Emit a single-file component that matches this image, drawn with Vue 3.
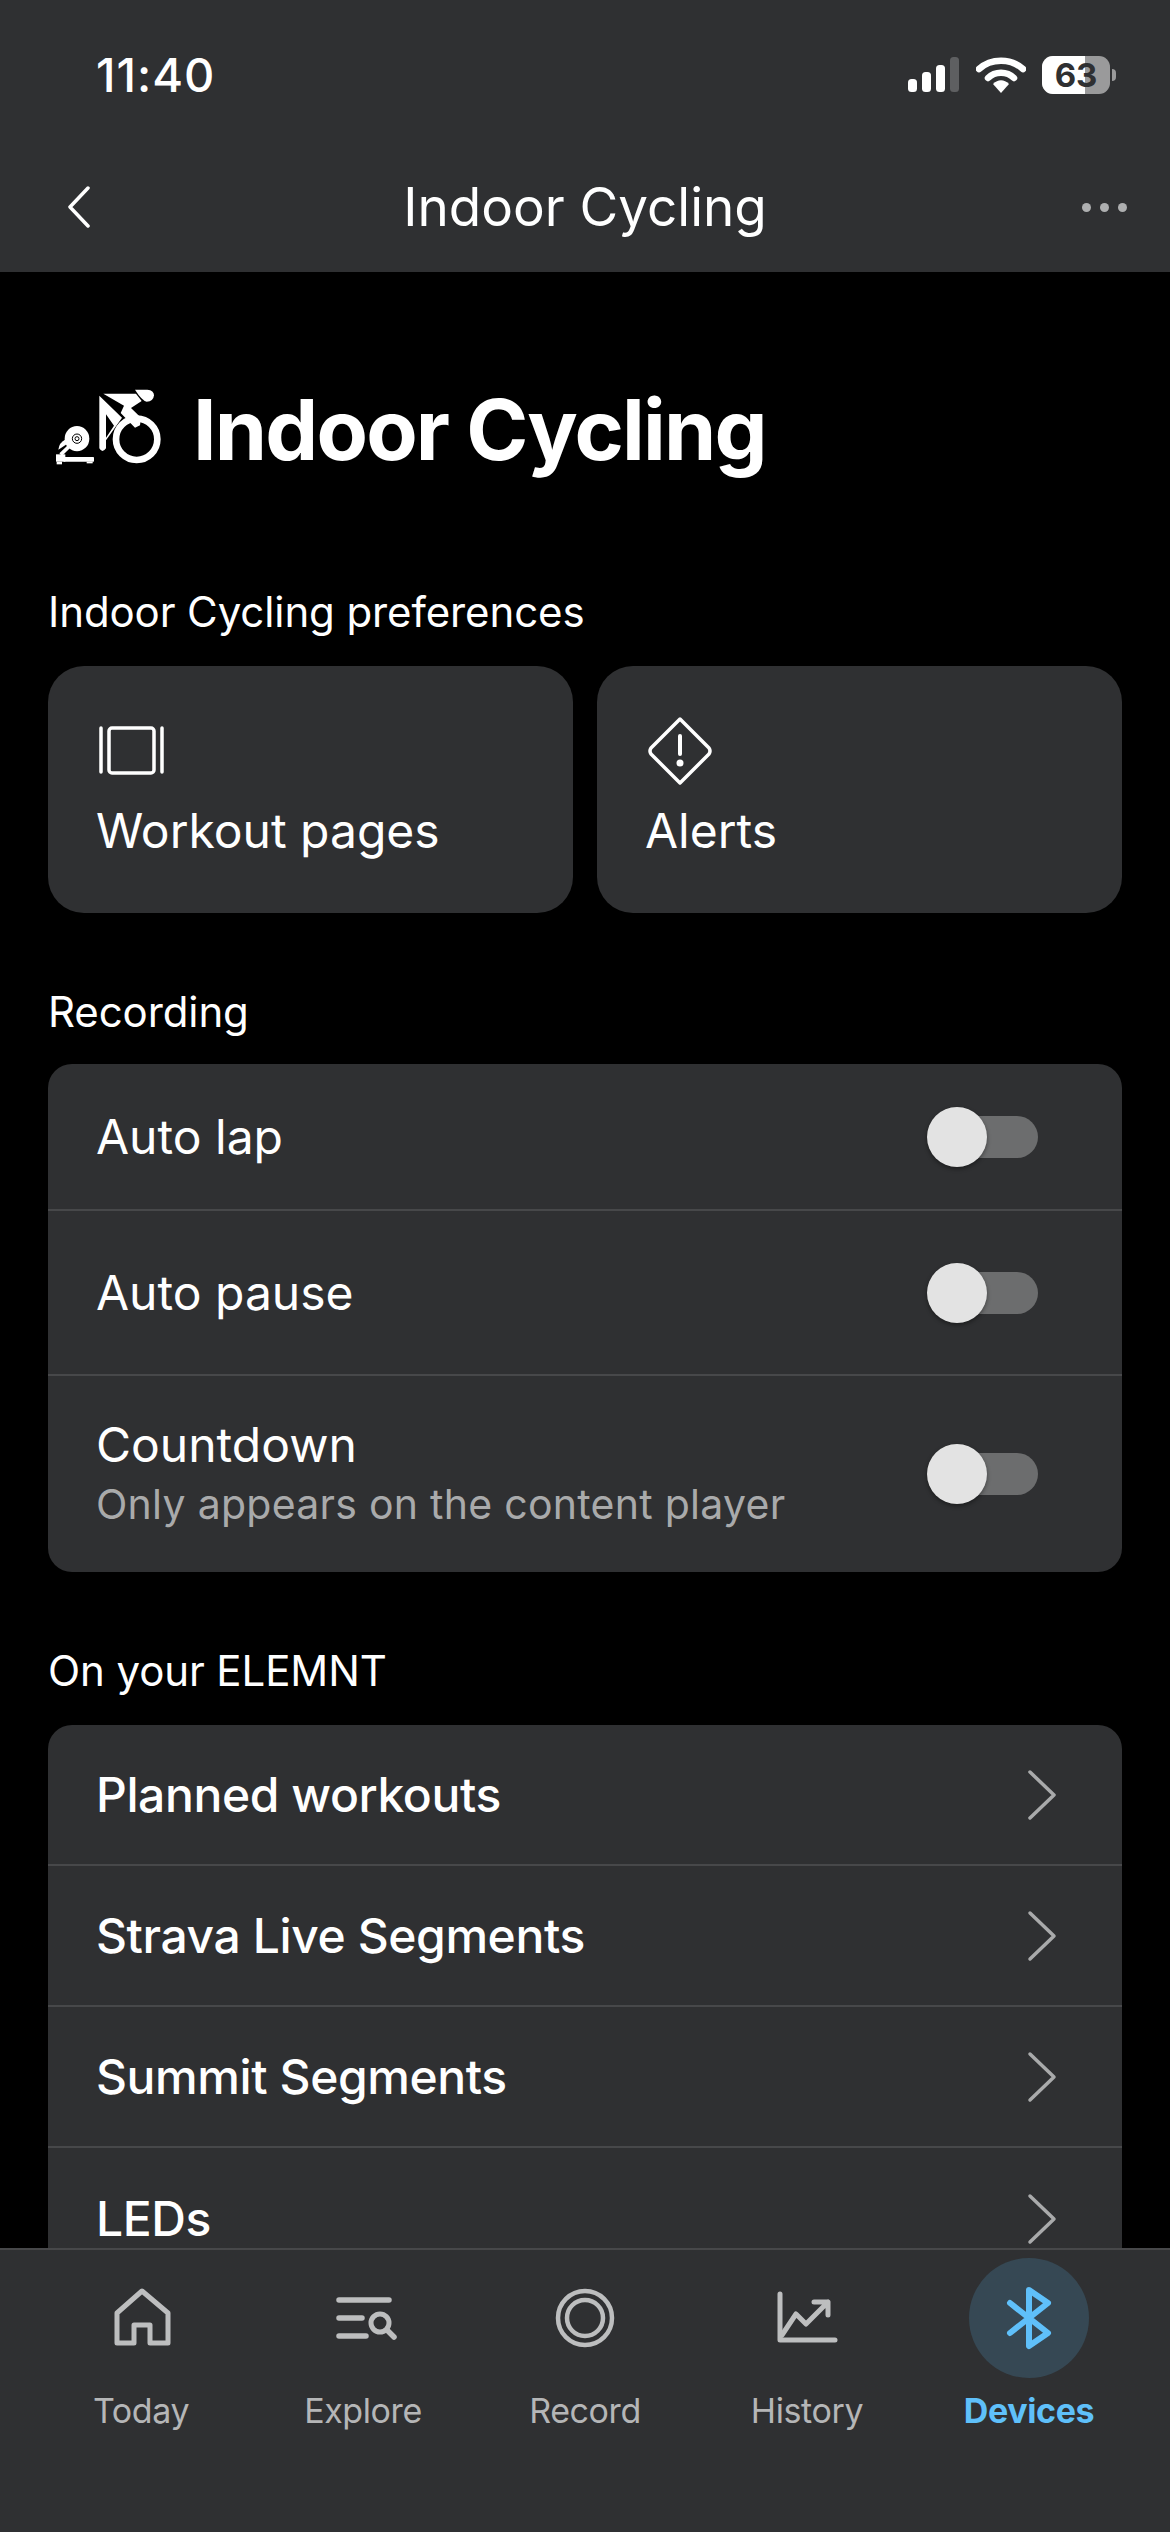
<template>
  <div class="screen">
    <header class="top">
      <div class="status">
        <span class="time">11:40</span>
        <div class="status-icons">
          <svg class="signal" width="52" height="36" viewBox="0 0 52 36">
            <rect x="0" y="22" width="9" height="13" rx="3.5" fill="#fff" />
            <rect x="14" y="15" width="9" height="20" rx="3.5" fill="#fff" />
            <rect x="28" y="8" width="9" height="27" rx="3.5" fill="#fff" />
            <rect x="42" y="0" width="9" height="35" rx="3.5" fill="#5e5f61" />
          </svg>
          <svg class="wifi" width="50" height="36" viewBox="0 0 50 36">
            <path d="M3 12 C15 1 35 1 47 12" fill="none" stroke="#fff" stroke-width="6.5" stroke-linecap="round" />
            <path d="M12 21 C19 14 31 14 38 21" fill="none" stroke="#fff" stroke-width="6.5" stroke-linecap="round" />
            <path d="M17 27 C22 22 28 22 33 27 L25 36 Z" fill="#fff" />
          </svg>
          <div class="battery">
            <span class="battery-fill"></span>
            <span class="battery-num">63</span>
            <span class="battery-nub"></span>
          </div>
        </div>
      </div>
      <nav class="navbar">
        <svg class="back" width="24" height="42" viewBox="0 0 24 42">
          <path d="M21 2 L3 21 L21 40" fill="none" stroke="#fff" stroke-width="3.5" stroke-linecap="round" stroke-linejoin="round" />
        </svg>
        <span class="nav-title">Indoor Cycling</span>
        <div class="dots"><i></i><i></i><i></i></div>
      </nav>
    </header>

    <main class="content">
      <div class="heading">
        <svg class="heading-icon" width="117" height="80" viewBox="60 80 351 240">
          <ellipse cx="141" cy="235" rx="37" ry="38" fill="#fff" />
          <circle cx="141" cy="235" r="14" fill="none" stroke="#000" stroke-width="3" />
          <circle cx="141" cy="235" r="6" fill="none" stroke="#000" stroke-width="3" />
          <path d="M92 283 L128 248" stroke="#fff" stroke-width="11" />
          <path d="M85 268 Q88 246 105 238 L110 252 Z" fill="#fff" />
          <rect x="78" y="282" width="28" height="22" fill="#fff" />
          <rect x="80" y="304" width="16" height="8" fill="#fff" />
          <rect x="100" y="290" width="92" height="14" rx="2" fill="#fff" />
          <rect x="170" y="304" width="18" height="5" fill="#fff" />
          <circle cx="320" cy="237" r="62" fill="none" stroke="#fff" stroke-width="20" />
          <path d="M208 106 L276 172 L228 240 V264 Q217 280 208 264 Z M228 162 V232 L252 196 Z" fill="#fff" fill-rule="evenodd" />
          <path d="M220 100 H318 L335 122 L303 143 L333 172 L330 195 L315 202 L272 158 L282 136 Z" fill="#fff" />
          <path d="M315 88 H352 Q372 90 372 105 Q370 124 350 124 Q335 120 315 88 Z" fill="#fff" />
        </svg>
        <h1>Indoor Cycling</h1>
      </div>

      <h2 class="section-label first">Indoor Cycling preferences</h2>
      <div class="tiles">
        <div class="tile">
          <svg class="tile-icon" width="68" height="70" viewBox="0 0 68 70">
            <path d="M5 12 V56 M66 12 V56" stroke="#fff" stroke-width="3.5" stroke-linecap="round" />
            <rect x="13" y="12" width="45" height="45" rx="3" fill="none" stroke="#fff" stroke-width="3.5" />
          </svg>
          <span>Workout pages</span>
        </div>
        <div class="tile">
          <svg class="tile-icon" width="68" height="70" viewBox="0 0 68 70">
            <path d="M35 3 L64 32 Q66 35 64 38 L35 67 L6 38 Q4 35 6 32 Z" fill="none" stroke="#fff" stroke-width="3.5" stroke-linejoin="round" />
            <path d="M35 20 V38" stroke="#fff" stroke-width="4" stroke-linecap="round" />
            <circle cx="35" cy="47" r="3.5" fill="#fff" />
          </svg>
          <span>Alerts</span>
        </div>
      </div>

      <h2 class="section-label">Recording</h2>
      <div class="group">
        <div v-for="row in toggles" :key="row.title" class="row" :class="row.cls">
          <div class="row-text">
            <span class="row-title">{{ row.title }}</span>
            <span v-if="row.sub" class="row-sub">{{ row.sub }}</span>
          </div>
          <div class="toggle"><span class="knob"></span></div>
        </div>
      </div>

      <h2 class="section-label last">On your ELEMNT</h2>
      <div class="group">
        <div v-for="item in links" :key="item" class="row link">
          <span class="row-title med">{{ item }}</span>
          <svg class="chev" width="30" height="52" viewBox="0 0 30 52">
            <path d="M3 3 L27 26 L3 49" fill="none" stroke="#a9aaab" stroke-width="3.5" stroke-linecap="round" stroke-linejoin="round" />
          </svg>
        </div>
      </div>
    </main>

    <footer class="tabbar">
      <div class="tab">
        <div class="tab-icon">
          <svg width="120" height="120" viewBox="0 0 120 120">
            <path d="M36 85 V55 L61 33 L87 55 V85 H69 V67 H53 V85 Z" fill="none" stroke="#bdbebf" stroke-width="5" stroke-linejoin="round" />
          </svg>
        </div>
        <span>Today</span>
      </div>
      <div class="tab">
        <div class="tab-icon">
          <svg width="120" height="120" viewBox="0 0 120 120">
            <path d="M36 42 H86 M36 60 H59 M36 78 H63" stroke="#bdbebf" stroke-width="5.5" stroke-linecap="round" />
            <circle cx="77" cy="65" r="9" fill="none" stroke="#bdbebf" stroke-width="5" />
            <path d="M84 72 L91 79" stroke="#bdbebf" stroke-width="5.5" stroke-linecap="round" />
          </svg>
        </div>
        <span>Explore</span>
      </div>
      <div class="tab">
        <div class="tab-icon">
          <svg width="120" height="120" viewBox="0 0 120 120">
            <circle cx="60" cy="60" r="27" fill="none" stroke="#bdbebf" stroke-width="4.5" />
            <circle cx="60" cy="60" r="18" fill="none" stroke="#bdbebf" stroke-width="4.5" />
          </svg>
        </div>
        <span>Record</span>
      </div>
      <div class="tab">
        <div class="tab-icon">
          <svg width="120" height="120" viewBox="0 0 120 120">
            <path d="M33 36 V82 H88" fill="none" stroke="#bdbebf" stroke-width="5" stroke-linecap="round" stroke-linejoin="round" />
            <path d="M35 77 L49 56 L59 66 L81 44 M67 44 H81 V57" fill="none" stroke="#bdbebf" stroke-width="5" stroke-linecap="round" stroke-linejoin="round" />
          </svg>
        </div>
        <span>History</span>
      </div>
      <div class="tab active">
        <div class="tab-icon pill">
          <svg width="120" height="120" viewBox="0 0 120 120">
            <path d="M41 45 L79 75 L60 88 V32 L79 45 L41 75" fill="none" stroke="#5fc0fa" stroke-width="6" stroke-linecap="round" stroke-linejoin="round" />
          </svg>
        </div>
        <span>Devices</span>
      </div>
    </footer>
  </div>
</template>

<script setup>
const toggles = [
  { title: 'Auto lap', cls: 'h1' },
  { title: 'Auto pause', cls: 'h2' },
  { title: 'Countdown', sub: 'Only appears on the content player', cls: 'h3' }
]

const links = ['Planned workouts', 'Strava Live Segments', 'Summit Segments', 'LEDs']
</script>

<style>
html,
body {
  margin: 0;
  background: #000;
}
</style>

<style scoped>
.screen {
  width: 1170px;
  height: 2532px;
  display: flex;
  flex-direction: column;
  background: #000;
  color: #fff;
  font-family: Inter, "Liberation Sans", sans-serif;
  overflow: hidden;
}
.top {
  height: 272px;
  flex: none;
  background: #2f3032;
}
.status {
  height: 148px;
  margin-bottom: 2px;
  padding: 0 53px 0 96px;
  display: flex;
  align-items: center;
  justify-content: space-between;
  box-sizing: border-box;
}
.time {
  font-size: 47px;
  font-weight: 500;
  letter-spacing: 1px;
}
.status-icons {
  display: flex;
  align-items: center;
  margin-top: 2px;
}
.wifi {
  margin-left: 16px;
}
.battery {
  position: relative;
  width: 68px;
  height: 38px;
  margin-left: 16px;
  margin-right: 7px;
  border-radius: 11px;
  background: #9a9a9b;
  display: flex;
  align-items: center;
  justify-content: center;
}
.battery-fill {
  position: absolute;
  left: 0;
  top: 0;
  bottom: 0;
  width: 43px;
  background: #fff;
  border-radius: 11px 0 0 11px;
}
.battery-num {
  position: relative;
  color: #2f3032;
  font-size: 33px;
  font-weight: 700;
}
.battery-nub {
  position: absolute;
  right: -6px;
  top: 13px;
  width: 4px;
  height: 12px;
  background: #9a9a9b;
  border-radius: 0 6px 6px 0;
}
.navbar {
  height: 114px;
  display: flex;
  align-items: center;
  justify-content: space-between;
  padding: 0 43px 0 67px;
  position: relative;
}
.nav-title {
  position: absolute;
  left: 0;
  right: 0;
  text-align: center;
  font-size: 53px;
  font-weight: 400;
}
.dots {
  display: flex;
  gap: 9px;
}
.dots i {
  width: 9px;
  height: 9px;
  border-radius: 50%;
  background: #aeafb0;
}
.content {
  flex: 1;
  min-height: 0;
  overflow: hidden;
  padding: 0 48px;
}
.heading {
  display: flex;
  align-items: center;
  height: 150px;
  margin-top: 85px;
}
.heading-icon {
  flex: none;
  margin-top: -10px;
  margin-left: 2px;
}
.heading h1 {
  margin: 0 0 6px 26px;
  font-size: 84px;
  font-weight: 700;
  letter-spacing: -1.8px;
  white-space: nowrap;
}
.section-label {
  margin: 0;
  height: 54px;
  line-height: 54px;
  font-size: 42px;
  font-weight: 400;
  letter-spacing: -0.1px;
  margin-top: 72px;
  margin-bottom: 25px;
}
.section-label.first {
  margin-top: 78px;
  margin-bottom: 27px;
}
.section-label.last {
  margin-bottom: 27px;
}
.tiles {
  display: grid;
  grid-template-columns: 1fr 1fr;
  gap: 24px;
}
.tile {
  height: 247px;
  background: #2f3032;
  border-radius: 36px;
  padding: 50px 0 0 48px;
  box-sizing: border-box;
  font-size: 48px;
  display: flex;
  flex-direction: column;
}
.tile-icon {
  margin-bottom: 15px;
}
.group {
  background: #2f3032;
  border-radius: 24px;
  overflow: hidden;
}
.row {
  display: flex;
  align-items: center;
  justify-content: space-between;
  padding: 0 84px 0 48px;
  border-bottom: 2px solid #47484a;
  box-sizing: border-box;
}
.row:last-child {
  border-bottom: none;
}
.row.h1 {
  height: 147px;
}
.row.h2 {
  height: 165px;
}
.row.h3 {
  height: 196px;
}
.row.link {
  height: 141px;
  padding-right: 65px;
}
.row-text {
  display: flex;
  flex-direction: column;
}
.row-title {
  font-size: 48px;
  line-height: 60px;
}
.row-title.med {
  font-weight: 500;
  letter-spacing: -0.4px;
}
.row-sub {
  font-size: 41px;
  line-height: 58px;
  letter-spacing: 0.27px;
  color: #a9aaab;
}
.toggle {
  position: relative;
  width: 84px;
  height: 42px;
  border-radius: 21px;
  background: #6c6d6e;
}
.knob {
  position: absolute;
  left: -27px;
  top: -9px;
  width: 60px;
  height: 60px;
  border-radius: 50%;
  background: #e3e3e3;
  box-shadow: 0 2px 4px rgba(0, 0, 0, 0.4);
}
.tabbar {
  height: 284px;
  flex: none;
  background: #2f3032;
  border-top: 2px solid #47484a;
  box-sizing: border-box;
  padding: 8px 30px 0;
  display: grid;
  grid-template-columns: repeat(5, 1fr);
}
.tab {
  display: flex;
  flex-direction: column;
  align-items: center;
  font-size: 34px;
  letter-spacing: -0.4px;
  color: #b5b6b7;
}
.tab-icon {
  width: 120px;
  height: 120px;
  margin-bottom: 12px;
}
.pill {
  background: #364854;
  border-radius: 50%;
}
.active {
  color: #5fc0fa;
  font-weight: 700;
}
</style>
